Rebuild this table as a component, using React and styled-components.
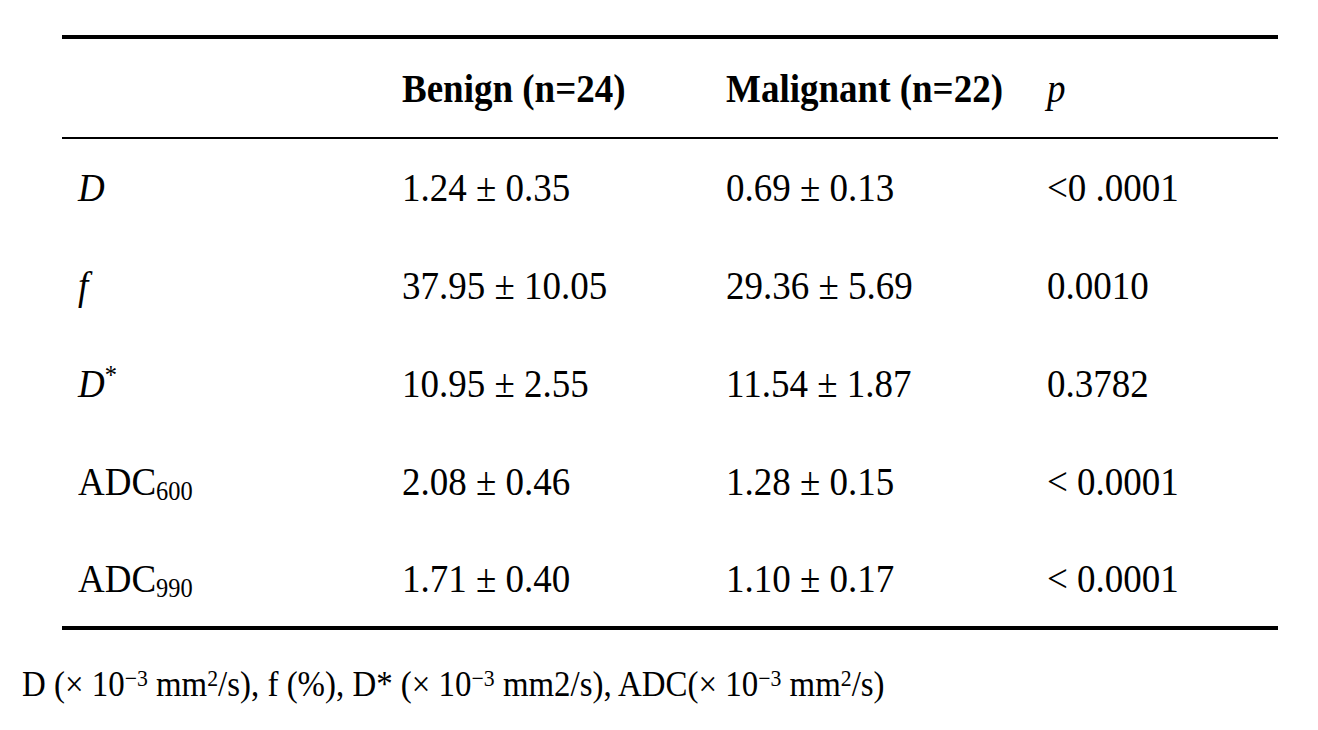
import React from "react";
import styled, { createGlobalStyle } from "styled-components";

const GlobalStyle = createGlobalStyle`
  html, body {
    margin: 0;
    padding: 0;
    background: #ffffff;
  }
  body {
    font-family: "Liberation Serif", "Times New Roman", serif;
    color: #000000;
  }
`;

const Page = styled.div`
  padding: 35px 0 0 22px;
  width: 1318px;
  height: 730px;
  box-sizing: border-box;
`;

const Table = styled.table`
  margin-left: 40px;
  width: 1216px;
  border-collapse: collapse;
  table-layout: fixed;
  border-top: 4px solid #000;
  border-bottom: 4px solid #000;
  font-size: 40px;
`;

const HeadRow = styled.tr`
  height: 101px;
  border-bottom: 2px solid #000;
`;

const BodyRow = styled.tr`
  height: 98px;
`;

const Th = styled.th`
  box-sizing: border-box;
  width: ${(p) => p.$w || "auto"};
  padding: 0 0 0 ${(p) => p.$pad || "0px"};
  text-align: left;
  vertical-align: middle;
  font-weight: ${(p) => (p.$italic ? 400 : 700)};
  font-style: ${(p) => (p.$italic ? "italic" : "normal")};
  white-space: nowrap;
`;

const Td = styled.td`
  box-sizing: border-box;
  padding: ${(p) => (p.$first ? "0" : "1px")} 0 0 ${(p) => p.$pad || "0px"};
  text-align: left;
  vertical-align: middle;
  font-style: ${(p) => (p.$italic ? "italic" : "normal")};
  white-space: nowrap;
`;

// the source typeset is a little condensed: taller glyphs, narrower advance
const Text = styled.span`
  display: inline-block;
  transform: scaleX(0.925);
  transform-origin: left center;
`;

const Sub = styled.sub`
  font-size: 0.66em;
  vertical-align: -0.18em;
  line-height: 0;
`;

const Star = styled.sup`
  font-size: 0.66em;
  font-style: normal;
  vertical-align: 0.5em;
  line-height: 0;
`;

const Note = styled.p`
  margin: 34px 0 0 0;
  font-size: 35.6px;
  line-height: 1.15;
  white-space: nowrap;
`;

const Sup = styled.sup`
  font-size: 0.66em;
  vertical-align: 0.42em;
  line-height: 0;
`;

const rows = [
  { label: <>D</>, italic: true, benign: "1.24 ± 0.35", malignant: "0.69 ± 0.13", p: "<0 .0001" },
  { label: <>f</>, italic: true, benign: "37.95 ± 10.05", malignant: "29.36 ± 5.69", p: "0.0010" },
  {
    label: (
      <>
        D<Star>*</Star>
      </>
    ),
    italic: true,
    benign: "10.95 ± 2.55",
    malignant: "11.54 ± 1.87",
    p: "0.3782",
  },
  {
    label: (
      <>
        ADC<Sub>600</Sub>
      </>
    ),
    benign: "2.08 ± 0.46",
    malignant: "1.28 ± 0.15",
    p: "< 0.0001",
  },
  {
    label: (
      <>
        ADC<Sub>990</Sub>
      </>
    ),
    benign: "1.71 ± 0.40",
    malignant: "1.10 ± 0.17",
    p: "< 0.0001",
  },
];

const App = () => {
  return (
    <>
      <GlobalStyle />
      <Page>
        <Table>
          <thead>
            <HeadRow>
              <Th $w="340px" $pad="16px"></Th>
              <Th $w="324px">
                <Text>Benign (n=24)</Text>
              </Th>
              <Th $w="321px">
                <Text>Malignant (n=22)</Text>
              </Th>
              <Th $italic>
                <Text>p</Text>
              </Th>
            </HeadRow>
          </thead>
          <tbody>
            {rows.map((r, i) => (
              <BodyRow key={i}>
                <Td $pad="16px" $italic={r.italic} $first={i === 0}>
                  <Text>{r.label}</Text>
                </Td>
                <Td $first={i === 0}>
                  <Text>{r.benign}</Text>
                </Td>
                <Td $first={i === 0}>
                  <Text>{r.malignant}</Text>
                </Td>
                <Td $first={i === 0}>
                  <Text>{r.p}</Text>
                </Td>
              </BodyRow>
            ))}
          </tbody>
        </Table>
        <Note>
          <Text>
            D (× 10<Sup>−3</Sup> mm<Sup>2</Sup>/s), f (%), D* (× 10<Sup>−3</Sup> mm2/s),
            ADC(× 10<Sup>−3</Sup> mm<Sup>2</Sup>/s)
          </Text>
        </Note>
      </Page>
    </>
  );
};

export default App;
